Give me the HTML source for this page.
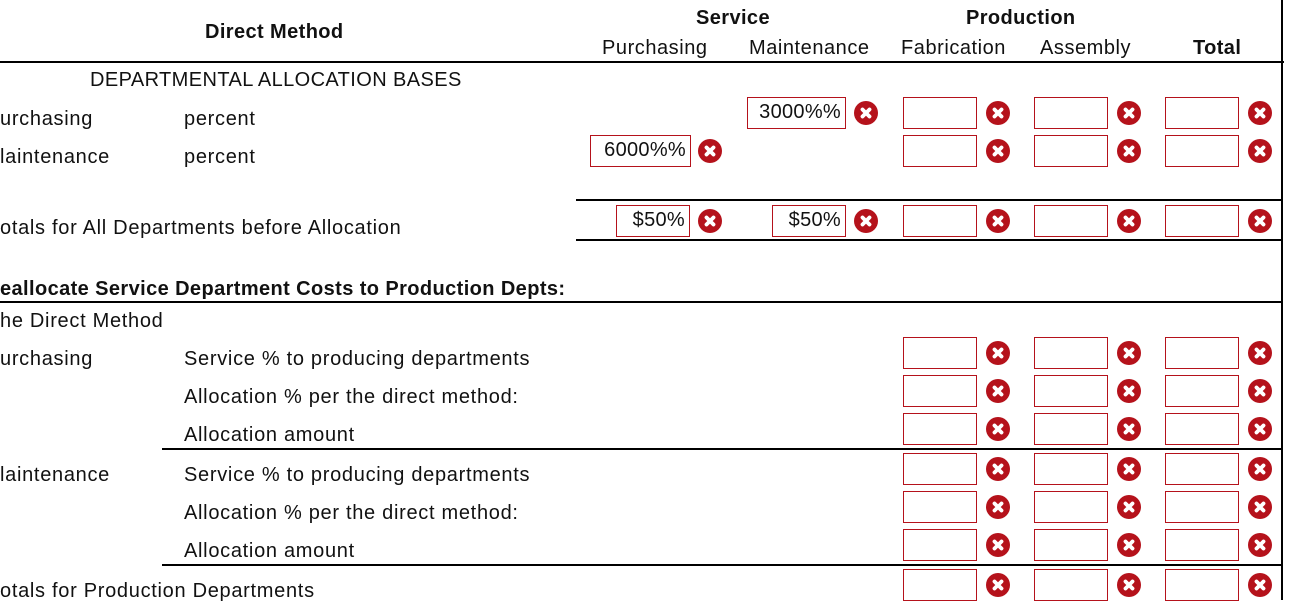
<!DOCTYPE html>
<html><head><meta charset="utf-8"><style>
body{margin:0;width:1290px;height:600px;overflow:hidden;background:#fff;font-family:"Liberation Sans",sans-serif;color:#111;position:relative}
.t{position:absolute;font-size:20px;letter-spacing:0.7px;line-height:24px;white-space:nowrap}
.b{font-weight:bold;letter-spacing:0.4px}
.l{position:absolute;height:2px;background:#000}
.bx{position:absolute;width:72px;height:30px;border:1px solid #b5121b;background:#fff;font-size:20px;letter-spacing:0.3px;line-height:28px;text-align:right;padding:0;box-sizing:content-box}
.bx span{padding-right:4px}
.ic{position:absolute;width:24px;height:24px}
</style></head><body>
<div class="t b" style="left:205px;top:20px">Direct Method</div>
<div class="t b" style="left:696px;top:6px">Service</div>
<div class="t b" style="left:966px;top:6px">Production</div>
<div class="t" style="left:602px;top:36px;letter-spacing:0.55px">Purchasing</div>
<div class="t" style="left:749px;top:36px;letter-spacing:0.55px">Maintenance</div>
<div class="t" style="left:901px;top:36px;letter-spacing:0.55px">Fabrication</div>
<div class="t" style="left:1040px;top:36px;letter-spacing:0.55px">Assembly</div>
<div class="t b" style="left:1193px;top:36px">Total</div>
<div class="l" style="left:0;top:61px;width:1284px"></div>
<div style="position:absolute;left:1281px;top:0;width:2px;height:600px;background:#000"></div>
<div class="t" style="left:90px;top:68px;letter-spacing:0.4px">DEPARTMENTAL ALLOCATION BASES</div>
<div class="t" style="left:0;top:107px">urchasing</div><div class="t" style="left:184px;top:107px">percent</div>
<div class="t" style="left:0;top:145px">laintenance</div><div class="t" style="left:184px;top:145px">percent</div>
<div class="l" style="left:576px;top:199px;width:706px"></div>
<div class="l" style="left:576px;top:239px;width:706px"></div>
<div class="t" style="left:0;top:216px">otals for All Departments before Allocation</div>
<div class="t b" style="left:0;top:277px">eallocate Service Department Costs to Production Depts:</div>
<div class="l" style="left:0;top:301px;width:1282px"></div>
<div class="t" style="left:0;top:309px">he Direct Method</div>
<div class="t" style="left:0;top:347px">urchasing</div><div class="t" style="left:184px;top:347px">Service % to producing departments</div>
<div class="t" style="left:184px;top:385px">Allocation % per the direct method:</div>
<div class="t" style="left:184px;top:423px">Allocation amount</div>
<div class="l" style="left:162px;top:448px;width:1120px"></div>
<div class="t" style="left:0;top:463px">laintenance</div><div class="t" style="left:184px;top:463px">Service % to producing departments</div>
<div class="t" style="left:184px;top:501px">Allocation % per the direct method:</div>
<div class="t" style="left:184px;top:539px">Allocation amount</div>
<div class="l" style="left:162px;top:564px;width:1120px"></div>
<div class="t" style="left:0;top:579px">otals for Production Departments</div>

<div class="bx" style="left:747px;top:97px;width:97px"><span>3000%%</span></div>
<div class="bx" style="left:590px;top:135px;width:99px"><span>6000%%</span></div>
<div class="bx" style="left:616px;top:205px"><span>$50%</span></div>
<div class="bx" style="left:772px;top:205px"><span>$50%</span></div>

<svg width="0" height="0" style="position:absolute"><defs><g id="x"><circle cx="12" cy="12" r="12" fill="#b5121b"/><path d="M8.5 8.5L15.5 15.5M15.5 8.5L8.5 15.5" stroke="#fff" stroke-width="3.8" stroke-linecap="round"/></g></defs></svg>
<svg class="ic" style="left:854px;top:101px"><use href="#x"/></svg>
<svg class="ic" style="left:698px;top:139px"><use href="#x"/></svg>
<svg class="ic" style="left:698px;top:209px"><use href="#x"/></svg>
<svg class="ic" style="left:854px;top:209px"><use href="#x"/></svg>

<div id="grid"></div>
<script>
var tops=[97,135,205,337,375,413,453,491,529,569],xs=[903,1034,1165],h='';
tops.forEach(function(t){xs.forEach(function(x){
h+='<div class="bx" style="left:'+x+'px;top:'+t+'px"></div>';
h+='<svg class="ic" style="left:'+(x+83)+'px;top:'+(t+4)+'px"><use href="#x"/></svg>';});});
document.getElementById('grid').innerHTML=h;
</script>
</body></html>
